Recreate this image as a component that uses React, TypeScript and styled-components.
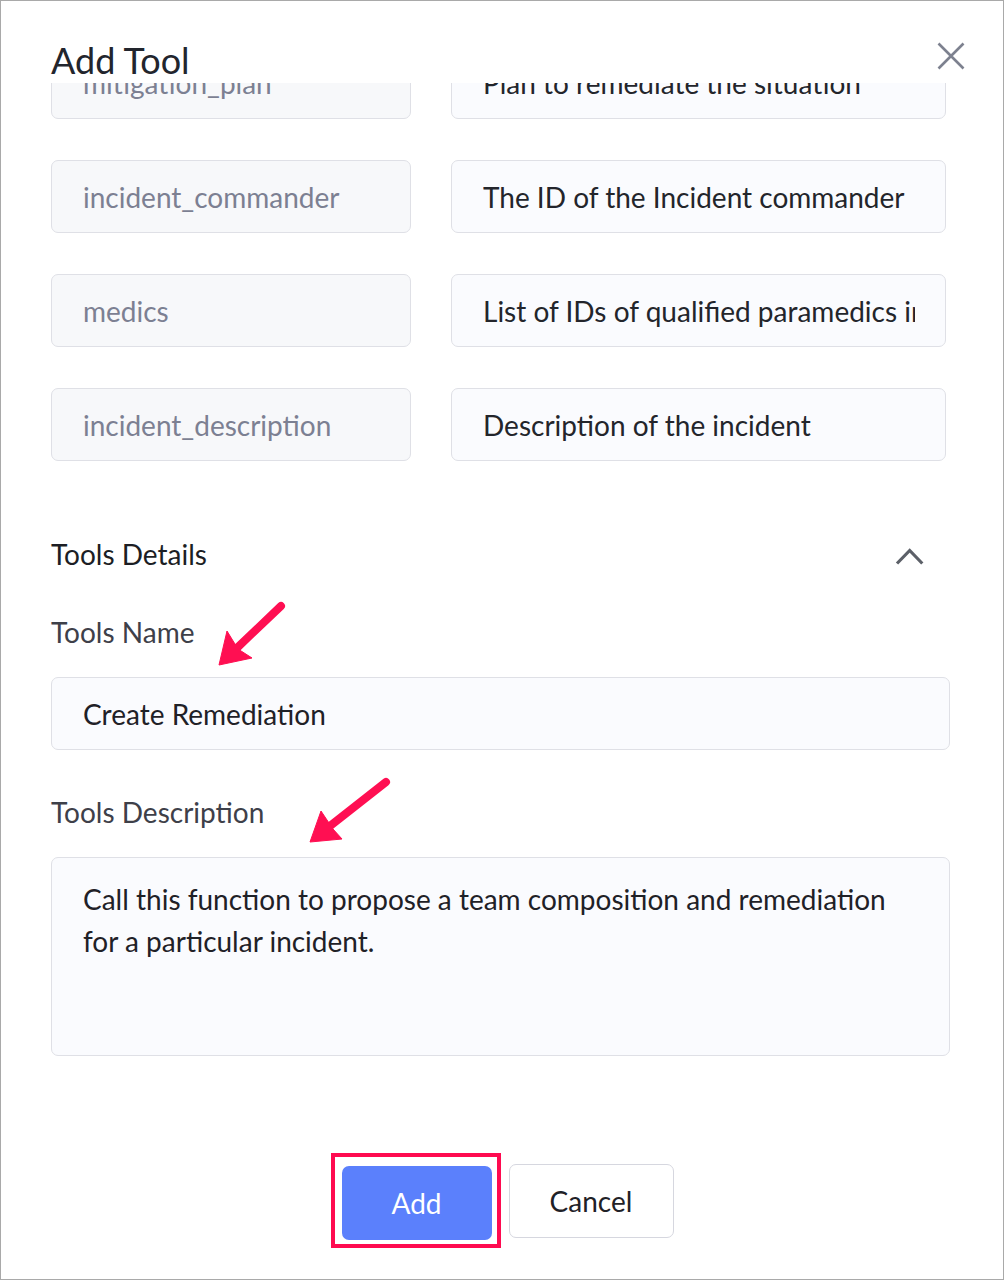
import React, { useLayoutEffect, useRef } from "react";
import styled, { createGlobalStyle } from "styled-components";

const Global = createGlobalStyle`
  html, body { margin: 0; padding: 0; background: #ffffff; }
  * { box-sizing: border-box; }
`;

const Frame = styled.div`
  position: relative;
  width: 1004px;
  height: 1280px;
  border: 1px solid #a9a9a9;
  background: #ffffff;
  display: flex;
  flex-direction: column;
  overflow: hidden;
  font-family: Lato, "Open Sans", sans-serif;
`;

const Header = styled.div`
  flex-shrink: 0;
  height: 82px;
  padding: 37px 38px 0 50px;
  display: flex;
  justify-content: space-between;
  align-items: flex-start;
`;

const Title = styled.h1`
  margin: 0;
  font-size: 36px;
  line-height: 44px;
  font-weight: 400;
  color: #22252d;
`;

const CloseButton = styled.button`
  margin-top: 4px;
  width: 28px;
  height: 28px;
  padding: 0;
  border: none;
  background: transparent;
  display: block;
`;

const Viewport = styled.div`
  flex-shrink: 0;
  height: 1002px;
  overflow: hidden;
  padding: 0 53px 0 50px;
`;

const Content = styled.div`
  display: flex;
  flex-direction: column;
  padding-bottom: 40px;
`;

const ParamGrid = styled.div`
  display: grid;
  grid-template-columns: 360px 495px;
  column-gap: 40px;
  row-gap: 41px;
`;

const Field = styled.div<{ $muted?: boolean }>`
  height: 73px;
  border: 1.5px solid #dfe0e6;
  border-radius: 7px;
  background: ${(p) => (p.$muted ? "#f7f8fa" : "#fafbfe")};
  padding: 0 30px 0 31px;
  display: flex;
  align-items: center;
  font-size: 28px;
  color: ${(p) => (p.$muted ? "#7c8092" : "#23252b")};
`;

const FieldText = styled.span`
  display: block;
  width: 100%;
  overflow: hidden;
  white-space: nowrap;
  line-height: 36px;
`;

const SectionRow = styled.div`
  margin-top: 73px;
  height: 40px;
  display: flex;
  align-items: center;
  justify-content: space-between;
`;

const SectionTitle = styled.h2`
  margin: 0;
  font-size: 28px;
  line-height: 40px;
  font-weight: 400;
  color: #1c1e24;
`;

const Chevron = styled.svg`
  display: block;
  margin-right: 24px;
`;

const Label = styled.label<{ $gap: number }>`
  display: block;
  margin-top: ${(p) => p.$gap}px;
  font-size: 28px;
  line-height: 36px;
  color: #3e4049;
`;

const TextInput = styled.div`
  margin-top: 27px;
  height: 73px;
  border: 1.5px solid #dfe0e6;
  border-radius: 7px;
  background: #fafbfe;
  padding: 0 31px;
  display: flex;
  align-items: center;
  font-size: 28px;
  line-height: 36px;
  color: #1f2127;
`;

const TextArea = styled.div`
  margin-top: 27px;
  height: 199px;
  border: 1.5px solid #dfe0e6;
  border-radius: 7px;
  background: #fafbfe;
  padding: 20px 31px;
  font-size: 28px;
  line-height: 42px;
  color: #1f2127;
  white-space: pre-line;
`;

const Footer = styled.div`
  flex-shrink: 0;
  padding-top: 68px;
  display: flex;
  justify-content: center;
  align-items: center;
  gap: 8px;
`;

const Highlight = styled.div`
  border: 4px solid #ff0a50;
  padding: 9px 5px 4px 7px;
  display: flex;
`;

const Button = styled.button<{ $primary?: boolean }>`
  height: 74px;
  width: ${(p) => (p.$primary ? "150px" : "165px")};
  border-radius: 7px;
  border: ${(p) => (p.$primary ? "none" : "1.5px solid #d6d7df")};
  background: ${(p) => (p.$primary ? "#5b80fc" : "#ffffff")};
  color: ${(p) => (p.$primary ? "#ffffff" : "#1f2127")};
  font-family: Lato, "Open Sans", sans-serif;
  font-size: 28px;
  line-height: 36px;
  padding: 0;
`;

const Annotations = styled.svg`
  position: absolute;
  left: -1px;
  top: -1px;
  pointer-events: none;
`;

const params = [
  { name: "mitigation_plan", desc: "Plan to remediate the situation" },
  { name: "incident_commander", desc: "The ID of the Incident commander" },
  { name: "medics", desc: "List of IDs of qualified paramedics in the area" },
  { name: "incident_description", desc: "Description of the incident" },
];

export default function App() {
  const viewRef = useRef<HTMLDivElement>(null);
  useLayoutEffect(() => {
    if (viewRef.current) viewRef.current.scrollTop = 37;
  }, []);

  return (
    <>
      <Global />
      <Frame>
        <Header>
          <Title>Add Tool</Title>
          <CloseButton aria-label="Close">
            <svg width="28" height="28" viewBox="0 0 28 28">
              <path d="M1.5 1.5 L26.5 26.5 M26.5 1.5 L1.5 26.5" stroke="#7d818f" strokeWidth="2.6" fill="none" />
            </svg>
          </CloseButton>
        </Header>

        <Viewport ref={viewRef}>
          <Content>
            <ParamGrid>
              {params.map((p) => (
                <React.Fragment key={p.name}>
                  <Field $muted>
                    <FieldText>{p.name}</FieldText>
                  </Field>
                  <Field>
                    <FieldText>{p.desc}</FieldText>
                  </Field>
                </React.Fragment>
              ))}
            </ParamGrid>

            <SectionRow>
              <SectionTitle>Tools Details</SectionTitle>
              <Chevron width="32" height="40" viewBox="0 0 32 40">
                <polyline points="3,29.5 15.7,16.5 28.3,29.5" stroke="#5c6068" strokeWidth="3.2" fill="none" />
              </Chevron>
            </SectionRow>

            <Label $gap={40}>Tools Name</Label>
            <TextInput>Create Remediation</TextInput>

            <Label $gap={44}>Tools Description</Label>
            <TextArea>
              {"Call this function to propose a team composition and remediation\nfor a particular incident."}
            </TextArea>
          </Content>
        </Viewport>

        <Footer>
          <Highlight>
            <Button $primary>Add</Button>
          </Highlight>
          <Button>Cancel</Button>
        </Footer>

        <Annotations width="1004" height="1280" viewBox="0 0 1004 1280">
          <g fill="#ff0f52" stroke="#ff0f52">
            <line x1="281" y1="606" x2="238" y2="647" strokeWidth="8" strokeLinecap="round" />
            <polygon points="219,665 227,631 238,649 252,658" strokeWidth="1" strokeLinejoin="round" />
            <line x1="386" y1="782" x2="330" y2="826" strokeWidth="8" strokeLinecap="round" />
            <polygon points="310,842 321,811 333,829 342,839" strokeWidth="1" strokeLinejoin="round" />
          </g>
        </Annotations>
      </Frame>
    </>
  );
}
